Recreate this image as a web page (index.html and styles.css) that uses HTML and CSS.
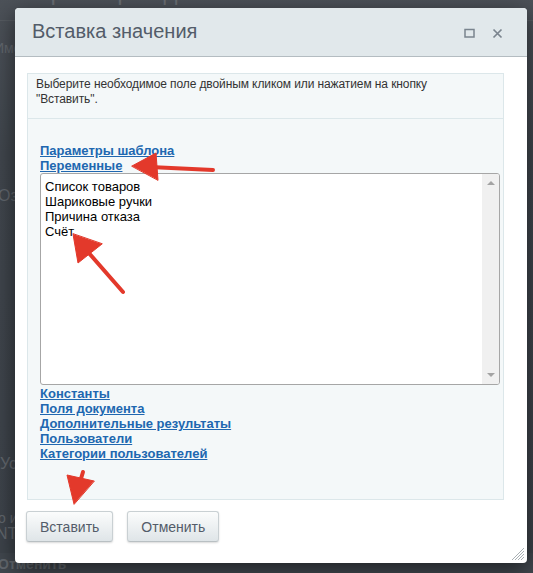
FILE: index.html
```html
<!DOCTYPE html>
<html lang="ru">
<head>
<meta charset="utf-8">
<title>Вставка значения</title>
<link rel="stylesheet" href="styles.css">
</head>
<body>
<div class="page">
  <div class="page-title">Параметров действий</div>
  <div class="page-line"></div>
  <div class="page-text t1">Имена</div>
  <div class="page-text t2">Оз</div>
  <div class="page-text t3">Ус</div>
  <div class="page-text t4">о и</div>
  <div class="page-text t5">NT</div>
  <div class="page-text t6">Отменить</div>
</div>

<div class="dialog">
  <div class="dialog-head">
    <div class="dialog-title">Вставка значения</div>
    <div class="head-icons">
      <svg class="ico" width="11" height="10" viewBox="0 0 11 10"><rect x="1" y="1.5" width="9" height="7.5" fill="none" stroke="#7a848e" stroke-width="1.5"/></svg>
      <svg class="ico" width="11" height="11" viewBox="0 0 11 11"><path d="M1.5 1.5 L9.5 9.5 M9.5 1.5 L1.5 9.5" stroke="#7a848e" stroke-width="1.7" fill="none"/></svg>
    </div>
  </div>
  <div class="dialog-body">
    <div class="panel">
      <div class="intro">Выберите необходимое поле двойным кликом или нажатием на кнопку<br>"Вставить".</div>
      <div class="groups">
        <a class="grp" href="#">Параметры шаблона</a>
        <a class="grp" href="#">Переменные</a>
        <div class="select">
          <div class="options">
            <div class="opt">Список товаров</div>
            <div class="opt">Шариковые ручки</div>
            <div class="opt">Причина отказа</div>
            <div class="opt">Счёт</div>
          </div>
          <div class="sbar">
            <span class="arr up"></span>
            <span class="arr down"></span>
          </div>
        </div>
        <a class="grp" href="#">Константы</a>
        <a class="grp" href="#">Поля документа</a>
        <a class="grp" href="#">Дополнительные результаты</a>
        <a class="grp" href="#">Пользователи</a>
        <a class="grp" href="#">Категории пользователей</a>
      </div>
    </div>
    <div class="buttons">
      <button class="btn">Вставить</button>
      <button class="btn">Отменить</button>
    </div>
  </div>
  <svg class="grip" width="16" height="16" viewBox="0 0 16 16">
    <path d="M15 3 L3 15 M15 6 L6 15 M15 9 L9 15 M15 12 L12 15" stroke="#a9b0b4" stroke-width="1" fill="none"/>
  </svg>
</div>

<svg class="arrows" width="533" height="573" viewBox="0 0 533 573">
  <g fill="#e3392b" stroke="#e3392b" stroke-linecap="round">
    <line x1="150" y1="167" x2="213" y2="170" stroke-width="4"/>
    <polygon points="132,166 156,153 158,180" stroke-width="1" stroke-linejoin="round"/>
    <line x1="88" y1="252" x2="123" y2="292" stroke-width="4"/>
    <polygon points="73,234 78,263 102,244" stroke-width="1" stroke-linejoin="round"/>
    <line x1="80" y1="482" x2="83" y2="472" stroke-width="4"/>
    <polygon points="74,504 67,475 94,481" stroke-width="1" stroke-linejoin="round"/>
  </g>
</svg>
</body>
</html>
```

FILE: styles.css
```css
html, body {
  margin: 0;
  padding: 0;
}

body {
  width: 533px;
  height: 573px;
  overflow: hidden;
  position: relative;
  background: #41474e;
  font-family: "Liberation Sans", Arial, sans-serif;
}

.page {
  height: 573px;
  background: linear-gradient(#4e535a, #40464d 30%, #3d434a);
  color: #62676d;
}

.page-title {
  font-size: 24px;
  line-height: 24px;
  margin-top: -20px;
  padding-left: 20px;
  color: #6a6e74;
}

.page-line {
  height: 1px;
  background: #555a60;
  margin-top: 16px;
}

.page-text {
  font-size: 14px;
  line-height: 16px;
  margin-left: -6px;
}

.t1 { margin-top: 19px; }
.t2 { margin-top: 132px; font-size: 16px; margin-left: -2px; }
.t3 { margin-top: 252px; font-size: 16px; margin-left: 0; }
.t4 { margin-top: 38px; margin-left: -2px; }
.t5 { margin-top: 0; margin-left: -4px; font-size: 16px; }
.t6 { margin-top: 14px; margin-left: -2px; font-weight: bold; }

.dialog {
  position: absolute;
  left: 15px;
  top: 8px;
  width: 512px;
  height: 555px;
  background: #fff;
  border-radius: 4px;
  box-shadow: 0 6px 22px rgba(0, 0, 0, 0.55);
  display: flex;
  flex-direction: column;
}

.dialog-head {
  height: 49px;
  box-sizing: border-box;
  background: #e1e8eb;
  border-bottom: 1px solid #b4bcc1;
  border-radius: 4px 4px 0 0;
  display: flex;
  align-items: center;
  padding: 0 0 0 17px;
}

.dialog-title {
  font-size: 20px;
  color: #535c69;
  margin-top: -1px;
}

.head-icons {
  margin-left: auto;
  display: flex;
  align-items: center;
  gap: 17px;
  padding-right: 24px;
  margin-top: 2px;
}

.ico {
  display: block;
}

.dialog-body {
  padding: 16px 23px 0 12px;
}

.panel {
  height: 427px;
  box-sizing: border-box;
  border: 1px solid #dce7ea;
  background: #f4f8f9;
}

.intro {
  font-size: 12px;
  line-height: 15px;
  letter-spacing: -0.1px;
  color: #333;
  padding: 3px 8px 11px;
  border-bottom: 1px solid #dce7ea;
}

.groups {
  padding: 24px 3px 0 12px;
}

.grp {
  display: block;
  width: max-content;
  font-size: 13px;
  line-height: 15px;
  font-weight: bold;
  color: #2067b0;
  text-decoration: underline;
}

.select {
  height: 212px;
  box-sizing: border-box;
  border: 1px solid #a6a6a6;
  border-radius: 3px;
  background: #fff;
  display: flex;
  margin-bottom: 1px;
}

.options {
  flex: 1;
  padding: 5px 4px 4px;
  font-size: 13px;
  line-height: 15px;
  color: #000;
}

.sbar {
  width: 17px;
  background: #f0f0f0;
  display: flex;
  flex-direction: column;
  justify-content: space-between;
  align-items: center;
  padding: 7px 0;
  border-radius: 0 2px 2px 0;
}

.arr {
  width: 0;
  height: 0;
  border-left: 4px solid transparent;
  border-right: 4px solid transparent;
}

.arr.up {
  border-bottom: 4px solid #a3a3a3;
}

.arr.down {
  border-top: 4px solid #a3a3a3;
}

.buttons {
  display: flex;
  gap: 14px;
  margin-top: 11px;
  margin-left: -1px;
}

.btn {
  height: 31px;
  padding: 0 13px;
  font-family: "Liberation Sans", Arial, sans-serif;
  font-size: 14px;
  color: #535c69;
  border: 1px solid #c9d0d3;
  border-bottom-color: #b9c0c3;
  border-radius: 3px;
  background: linear-gradient(#fbfcfc, #dfe5e8);
  box-shadow: 0 1px 2px rgba(0, 0, 0, 0.15);
}

.grip {
  position: absolute;
  right: 2px;
  bottom: 2px;
}

.arrows {
  position: absolute;
  left: 0;
  top: 0;
  pointer-events: none;
}
```
